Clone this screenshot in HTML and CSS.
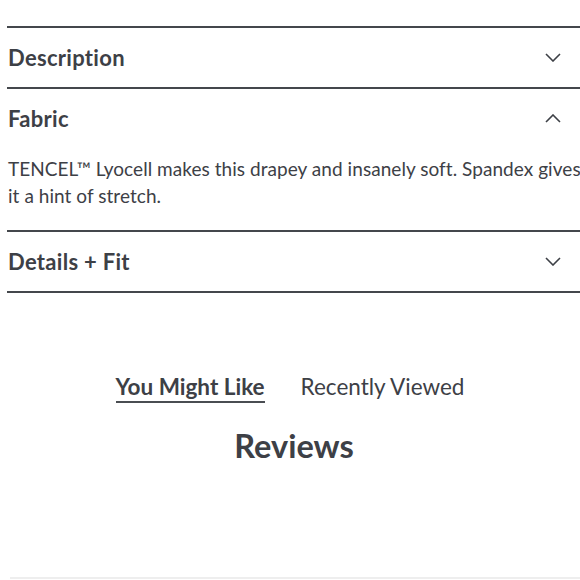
FILE: index.html
```html
<!DOCTYPE html>
<html lang="en">
<head>
<meta charset="utf-8">
<title>Product details</title>
<link rel="stylesheet" href="styles.css">
</head>
<body>
<main class="page">
  <section class="accordion">
    <div class="acc-item">
      <div class="acc-head">
        <h3 class="acc-title">Description</h3>
        <svg class="chev" width="16" height="9" viewBox="0 0 16 9"><path d="M1 1 L8 8 L15 1" fill="none" stroke="#3d4046" stroke-width="1.6"/></svg>
      </div>
    </div>
    <div class="acc-item">
      <div class="acc-head">
        <h3 class="acc-title">Fabric</h3>
        <svg class="chev" width="16" height="9" viewBox="0 0 16 9"><path d="M1 8 L8 1 L15 8" fill="none" stroke="#3d4046" stroke-width="1.6"/></svg>
      </div>
      <p class="acc-body">TENCEL™ Lyocell makes this drapey and insanely soft. Spandex gives it a hint of stretch.</p>
    </div>
    <div class="acc-item">
      <div class="acc-head">
        <h3 class="acc-title">Details + Fit</h3>
        <svg class="chev" width="16" height="9" viewBox="0 0 16 9"><path d="M1 1 L8 8 L15 1" fill="none" stroke="#3d4046" stroke-width="1.6"/></svg>
      </div>
    </div>
  </section>

  <nav class="tabs">
    <span class="tab active">You Might Like</span>
    <span class="tab">Recently Viewed</span>
  </nav>

  <h2 class="reviews">Reviews</h2>

  <div class="bottom-rule"></div>
</main>
</body>
</html>
```

FILE: styles.css
```css
html, body {
  margin: 0;
  padding: 0;
  background: #ffffff;
  overflow: hidden;
}

body {
  font-family: "Lato", "Noto Sans", sans-serif;
  color: #3d4046;
  width: 580px;
  height: 580px;
}

.page {
  padding-top: 26px;
}

.accordion {
  margin-left: 7px;
  width: 580px;
  border-top: 2px solid #44474c;
}

.acc-item {
  border-bottom: 2px solid #44474c;
}

.acc-head {
  height: 59px;
  display: flex;
  align-items: center;
  justify-content: space-between;
  padding-left: 1px;
  padding-right: 26px;
}

.acc-title {
  margin: 0;
  font-size: 22px;
  font-weight: 700;
  letter-spacing: 0.3px;
}

.chev {
  display: block;
}

.acc-body {
  margin: 0;
  padding: 7px 0 21px 1px;
  font-size: 19px;
  line-height: 27px;
  letter-spacing: 0.05px;
  width: 574px;
}

.tabs {
  margin-top: 80px;
  display: flex;
  justify-content: center;
  gap: 36px;
}

.tab {
  font-size: 22.5px;
  padding-bottom: 1px;
  border-bottom: 2px solid transparent;
}

.tab.active {
  font-weight: 700;
  border-bottom-color: #4a4d52;
}

.reviews {
  margin: 23px 0 0 0;
  text-align: center;
  font-size: 32.5px;
  font-weight: 700;
  padding-left: 8px;
}

.bottom-rule {
  margin-top: 112px;
  margin-left: 10px;
  height: 2px;
  background: #eeeeee;
}
```
